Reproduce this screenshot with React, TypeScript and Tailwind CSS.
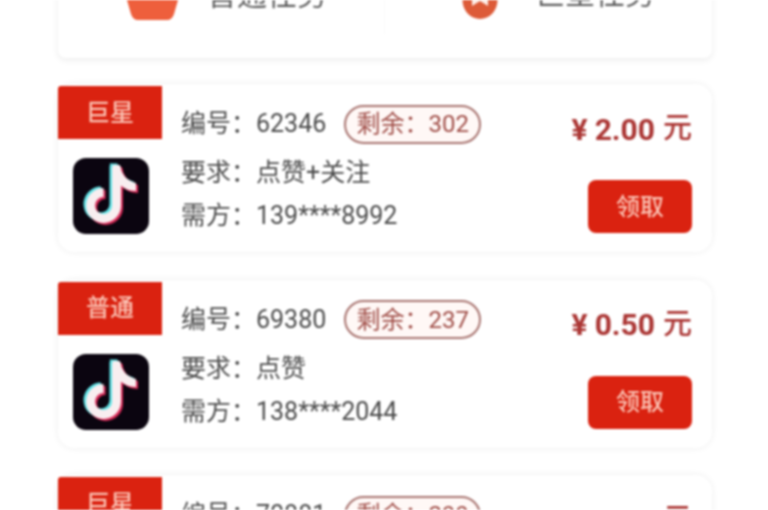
const FONT = "font-['Roboto','Noto_Sans_CJK_SC',sans-serif]";

const TASKS = [
  { tag: '巨星', id: '62346', left: '302', need: '点赞+关注', phone: '139****8992', price: '2.00' },
  { tag: '普通', id: '69380', left: '237', need: '点赞', phone: '138****2044', price: '0.50' },
  { tag: '巨星', id: '70881', left: '299', need: '点赞+关注', phone: '137****5120', price: '2.00' },
];

function NoteIcon() {
  const bowl = 'M43.5 9 V47.5 A13 13 0 1 1 30.5 34.5';
  const flag = 'M39 7 H47 C48 16 54 23 63 25 V33 C56 33 51 30 47 27 Z';
  return (
    <div className="h-[76px] w-[76px] rounded-[13px] bg-[#0b0510]">
      <svg viewBox="0 0 76 76" width="76" height="76" fill="none" strokeWidth="9">
        <path d={bowl} stroke="#5fe3e6" transform="translate(-2.5 -1.5)" />
        <path d={flag} fill="#5fe3e6" transform="translate(-2.5 -1.5)" />
        <path d={bowl} stroke="#d92a58" transform="translate(2 2)" />
        <path d={flag} fill="#d92a58" transform="translate(2 2)" />
        <path d={bowl} stroke="#f8eef0" />
        <path d={flag} fill="#f8eef0" />
      </svg>
    </div>
  );
}

function TaskCard({ task }: { task: (typeof TASKS)[number] }) {
  return (
    <section className="flex h-[168px] shrink-0 rounded-2xl bg-white pt-[2px] shadow-[0_0_7px_rgba(0,0,0,0.07)]">
      <div className="w-[104px] shrink-0">
        <div className="flex h-[53px] items-center justify-center rounded-tl-[3px] bg-[#da2210] text-[24px] font-medium text-[#fbc3b4]">
          {task.tag}
        </div>
        <div className="mt-[19px] ml-[15px]">
          <NoteIcon />
        </div>
      </div>
      <div className="ml-[19px] pt-[18px] text-[25px] text-[#4c4c4c]">
        <div className="flex h-[40px] items-center">
          <span className="w-[75px]">编号：</span>
          <span>{task.id}</span>
          <span className="ml-[18px] flex h-[39px] w-[137px] items-center justify-center rounded-full border-2 border-[#a87470] bg-[#fff8f6] text-[24px] text-[#a04e48]">
            剩余：{task.left}
          </span>
        </div>
        <div className="mt-[7px] flex h-[44px] items-center">
          <span className="w-[75px]">要求：</span>
          <span>{task.need}</span>
        </div>
        <div className="flex h-[42px] items-center">
          <span className="w-[75px]">需方：</span>
          <span>{task.phone}</span>
        </div>
      </div>
      <div className="ml-auto flex flex-col items-end pt-[23px] pr-[20px]">
        <div className="flex h-[40px] items-center whitespace-nowrap text-[#ab3634]">
          <span className="text-[30px] font-bold">¥</span>
          <span className="ml-[7px] text-[30px] font-bold">{task.price}</span>
          <span className="ml-[8px] text-[29px] font-medium">元</span>
        </div>
        <button
          type="button"
          className="mt-[31px] h-[53px] w-[104px] rounded-lg bg-[#da2210] text-[24px] font-medium text-[#fbc3b4]"
        >
          领取
        </button>
      </div>
    </section>
  );
}

export default function App() {
  return (
    <div className={`h-[510px] w-[768px] overflow-hidden bg-white pr-[56px] pl-[58px] blur-[0.8px] ${FONT}`}>
      <div className="-mt-[62px] flex h-[120px] items-start rounded-b-lg bg-white pt-[36px] shadow-[0_2px_7px_rgba(0,0,0,0.08)]">
        <div className="flex w-[326px] items-center pl-[69px]">
          <svg width="51" height="48" viewBox="0 0 51 48" className="shrink-0">
            <path d="M0 0 H51 V26 L47 40 Q45 46 40 46 H11 Q6 46 4 40 L0 26 Z" fill="#ee5f3c" />
          </svg>
          <span className="mb-[6px] ml-[29px] text-[30px] leading-[40px] text-[#5c5c5c]">普通任务</span>
        </div>
        <div className="flex h-[60px] flex-1 items-start border-l border-[#fafafa] pl-[77px]">
          <div className="flex items-center">
            <svg width="36" height="46" viewBox="0 0 36 46" className="shrink-0">
              <ellipse cx="18" cy="26" rx="17.5" ry="19" fill="#dd5b38" />
              <path d="M10 10 H26 V32 L18 27 L10 32 Z" fill="#fdeee8" />
            </svg>
            <span className="mb-[6px] ml-[37px] text-[30px] leading-[40px] text-[#5c5c5c]">巨星任务</span>
          </div>
        </div>
      </div>
      <div className="mt-[26px] flex flex-col gap-[27.5px]">
        {TASKS.map((task) => (
          <TaskCard key={task.id} task={task} />
        ))}
      </div>
    </div>
  );
}
